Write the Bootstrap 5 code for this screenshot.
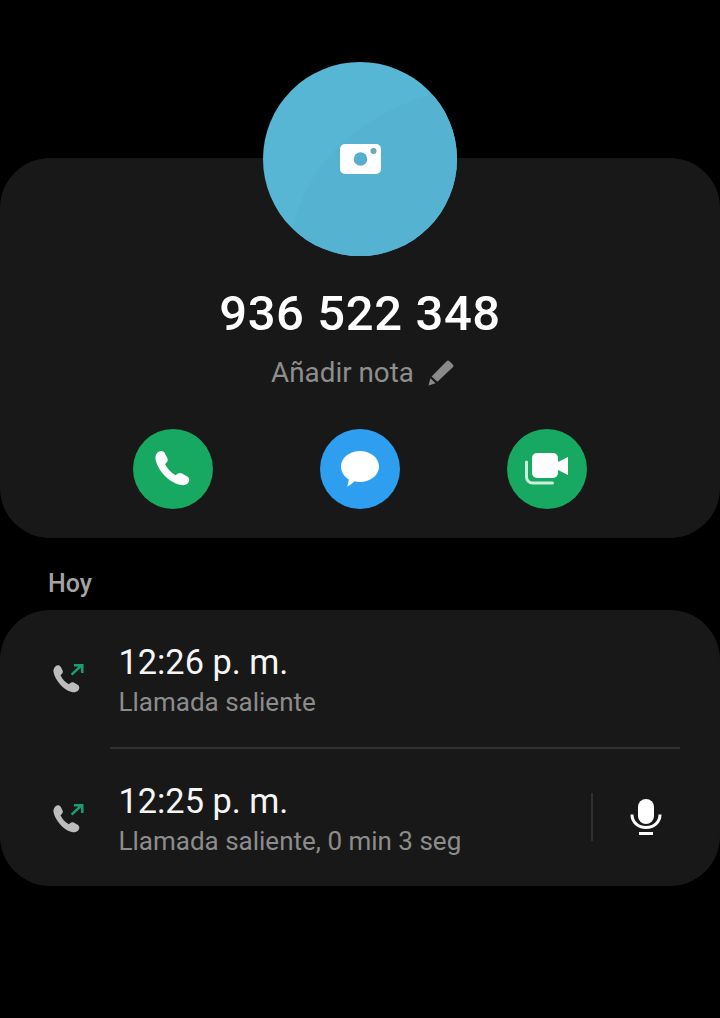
<!DOCTYPE html>
<html lang="es">
<head>
<meta charset="utf-8">
<title>Contacto</title>
<link href="https://cdn.jsdelivr.net/npm/bootstrap@5.3.0/dist/css/bootstrap.min.css" rel="stylesheet">
<style>
html,body{height:100%;}
body{background:#000;font-family:Roboto,"Liberation Sans",sans-serif;color:#fff;padding-top:158px;overflow:hidden;}
.panel{background:#181818;border-radius:50px;}
.hero{height:380px;}
.avatar{width:194px;height:194px;margin-top:-96px;border-radius:50%;background:#57b6d4;overflow:hidden;position:relative;}
.avatar-svg{position:absolute;left:0;top:0;}
.phone-num{font-size:49px;font-weight:500;line-height:54px;margin-top:31px;letter-spacing:.6px;}
.note{font-size:27.8px;line-height:32px;color:#8e8e8e;margin-top:16px;gap:14px;padding-left:5px;}
.actions{gap:107px;margin-top:40px;}
.act{width:80px;height:80px;border-radius:50%;}
.act-green{background:#17a862;}
.act-blue{background:#2e9ff0;}
.day{font-size:25px;font-weight:500;line-height:28px;color:#a3a3a3;margin:32px 0 12px 48px;}
.calls{height:276px;}
.call-row{height:138px;}
.call-row.first{height:137px;padding-top:2px;}
.ic-col{width:118.500px;padding-left:52px;}
.ic-svg{margin-top:4px;}
.call-row.first .ic-svg{margin-top:0;}
.t-main{font-size:34.3px;line-height:40px;color:#f5f5f5;}
.t-sub{font-size:26px;line-height:30px;color:#8c8c8c;margin-top:5px;}
.rule{height:2px;background:#313131;margin:0 40px 0 110px;}
.vbar{width:2px;height:48px;background:#303030;margin-right:37px;margin-top:-2px;}
.mic-wrap{margin-right:58px;margin-top:-3px;}
</style>
</head>
<body>
<section class="panel hero d-flex flex-column align-items-center">
  <div class="avatar d-flex align-items-center justify-content-center flex-shrink-0">
    <svg class="avatar-svg" width="194" height="194" viewBox="0 0 194 194"><path d="M30 165C42 115 78 62 160 35L194 25V194H30Z" fill="#55b3d1"/></svg>
    <svg class="position-relative" width="41" height="30" viewBox="0 0 41 30"><rect width="41" height="30" rx="5" fill="#fff"/><circle cx="20.500" cy="15" r="6.800" fill="#56b0cd"/><circle cx="33.500" cy="7" r="3" fill="#6ea6b7"/></svg>
  </div>
  <div class="phone-num">936 522 348</div>
  <div class="note d-flex align-items-center">
    <span>Añadir nota</span>
    <svg width="26" height="26" viewBox="0 0 26 26"><path d="M18.600 1.200a2 2 0 0 1 2.800 0l3.400 3.200a2 2 0 0 1 0 2.800L9.400 21.800 3.600 16.400Z" fill="#8a8a8a"/><path d="M2.400 18.200l5.200 5L.6 25.600Z" fill="#8a8a8a"/></svg>
  </div>
  <div class="actions d-flex">
    <div class="act act-green d-flex align-items-center justify-content-center">
      <svg width="38" height="38" viewBox="0 0 38 38"><path d="M4.600 1.700C6.700.4 9.500.900 10.700 3l2.600 5c.8 1.600.5 3.400-.7 4.600l-1.500 1.500c1.900 4.300 6 8.800 10.600 11.200l1.900-1.500c1.300-1 3.100-1.100 4.500-.3l5.200 3c2 1.200 2.600 3.800 1.300 5.700-1.300 2-3.900 3.300-6.500 2.900C14.900 33.300 3.300 19.500 1.500 8.900 1 6 2.300 3.200 4.600 1.700Z" fill="#fff"/></svg>
    </div>
    <div class="act act-blue d-flex align-items-center justify-content-center">
      <svg width="38" height="36" viewBox="0 0 38 36"><path d="M19 0c10.500 0 19 6.900 19 15.500S29.500 31 19 31c-2 0-3.800-.3-5.500-.7-2 2.300-4.700 4-7.500 5.200 1-1.800 1.500-4.200 1.700-7.200C3 25.500 0 20.800 0 15.500 0 6.900 8.500 0 19 0Z" fill="#fff"/></svg>
    </div>
    <div class="act act-green d-flex align-items-center justify-content-center">
      <svg width="44" height="32" viewBox="0 0 44 32"><path d="M1.500 9v15a6 6 0 0 0 6 6h20" fill="none" stroke="#cdeedd" stroke-width="3" stroke-linecap="round"/><rect x="7" y="0" width="26" height="25" rx="5" fill="#fff"/><path d="M33 9l10-5v18l-10-5Z" fill="#fff"/></svg>
    </div>
  </div>
</section>
<h2 class="day">Hoy</h2>
<section class="panel calls">
  <div class="call-row first d-flex align-items-center">
    <div class="ic-col flex-shrink-0">
      <svg class="ic-svg" width="38" height="38" viewBox="0 0 32 32"><path d="M3 4.500C4.500 3 6.500 3.300 7.400 5l1.500 3c.5 1.100.2 2.300-.7 3l-1 .9c1.300 3 3.900 6 7 7.700l1.200-1c.9-.8 2.200-.9 3.200-.3l3 1.800c1.600 1 1.900 3.100.6 4.500-1.400 1.500-3.400 2.100-5.500 1.600C9.500 24.500 2.500 15.800 1.300 9.500.9 7.700 1.700 5.700 3 4.500Z" fill="#bdbdbd"/><path d="M16.500 11.500L25 3.500M18.500 3.500H25.500V10" fill="none" stroke="#17a070" stroke-width="2.100"/></svg>
    </div>
    <div>
      <div class="t-main">12:26 p. m.</div>
      <div class="t-sub">Llamada saliente</div>
    </div>
  </div>
  <div class="rule"></div>
  <div class="call-row d-flex align-items-center">
    <div class="ic-col flex-shrink-0">
      <svg class="ic-svg" width="38" height="38" viewBox="0 0 32 32"><path d="M3 4.500C4.500 3 6.500 3.300 7.400 5l1.500 3c.5 1.100.2 2.300-.7 3l-1 .9c1.300 3 3.900 6 7 7.700l1.200-1c.9-.8 2.200-.9 3.200-.3l3 1.800c1.600 1 1.900 3.100.6 4.500-1.400 1.500-3.400 2.100-5.500 1.600C9.500 24.500 2.500 15.800 1.300 9.500.9 7.700 1.700 5.700 3 4.500Z" fill="#bdbdbd"/><path d="M16.500 11.500L25 3.500M18.500 3.500H25.500V10" fill="none" stroke="#17a070" stroke-width="2.100"/></svg>
    </div>
    <div class="flex-grow-1">
      <div class="t-main">12:25 p. m.</div>
      <div class="t-sub">Llamada saliente, 0 min 3 seg</div>
    </div>
    <div class="vbar"></div>
    <div class="mic-wrap">
      <svg class="d-block" width="32" height="38" viewBox="0 0 32 38"><rect x="8" y="1" width="16" height="25" rx="8" fill="#fff"/><path d="M2 16.500c0 7.500 6 13 14 13s14-5.500 14-13" fill="none" stroke="#fff" stroke-width="3"/><rect x="9" y="34" width="14" height="3" fill="#fff"/></svg>
    </div>
  </div>
</section>
<script src="https://cdn.jsdelivr.net/npm/bootstrap@5.3.0/dist/js/bootstrap.bundle.min.js"></script>
</body>
</html>
